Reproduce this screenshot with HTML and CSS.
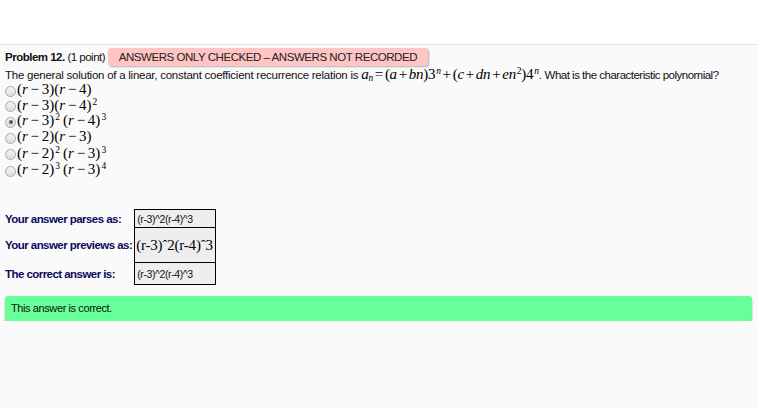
FILE: index.html
```html
<!DOCTYPE html>
<html>
<head>
<meta charset="utf-8">
<link rel="stylesheet" href="styles.css">
</head>
<body>
<div class="top"></div>
<div class="problem">
  <div class="head"><b>Problem 12.</b> (1 point) <span class="badge">ANSWERS ONLY CHECKED – ANSWERS NOT RECORDED</span></div>
  <div class="q">The general solution of a linear, constant coefficient recurrence relation is <span class="m qm"><i>a<sub>n</sub></i> = (<i>a</i> + <i>bn</i>)3<sup><i>n</i></sup> + (<i>c</i> + <i>dn</i> + <i>en</i><sup>2</sup>)4<sup><i>n</i></sup></span>. <span class="tail">What is the characteristic polynomial?</span></div>
  <div class="opts">
    <div class="opt"><span class="radio"></span><span class="m">(<i>r</i> − 3)(<i>r</i> − 4)</span></div>
    <div class="opt"><span class="radio"></span><span class="m">(<i>r</i> − 3)(<i>r</i> − 4)<sup>2</sup></span></div>
    <div class="opt"><span class="radio on"></span><span class="m">(<i>r</i> − 3)<sup>2</sup>(<i>r</i> − 4)<sup>3</sup></span></div>
    <div class="opt"><span class="radio"></span><span class="m">(<i>r</i> − 2)(<i>r</i> − 3)</span></div>
    <div class="opt"><span class="radio"></span><span class="m">(<i>r</i> − 2)<sup>2</sup>(<i>r</i> − 3)<sup>3</sup></span></div>
    <div class="opt"><span class="radio"></span><span class="m">(<i>r</i> − 2)<sup>3</sup>(<i>r</i> − 3)<sup>4</sup></span></div>
  </div>
  <table class="ans">
    <tr class="r1"><th>Your answer parses as:</th><td>(r-3)^2(r-4)^3</td></tr>
    <tr class="r2"><th>Your answer previews as:</th><td class="prev">(r-3)ˆ2(r-4)ˆ3</td></tr>
    <tr class="r3"><th>The correct answer is:</th><td>(r-3)^2(r-4)^3</td></tr>
  </table>
  <div class="correct">This answer is correct.</div>
</div>
</body>
</html>
```
FILE: styles.css
```css
html, body {
  margin: 0;
  padding: 0;
  background: #fafafa;
  font-family: "Liberation Sans", Arial, sans-serif;
  color: #111;
}
.top {
  height: 44px;
  background: #ffffff;
  border-bottom: 1px solid #e2e2e2;
}
.problem {
  padding: 3px 6px 0 5px;
  font-size: 11.5px;
  letter-spacing: -0.25px;
}
.head {
  height: 18px;
  line-height: 18px;
  display: flex;
  align-items: center;
  white-space: pre;
  letter-spacing: -0.5px;
}
.head b {
  font-weight: bold;
}
.badge {
  margin-left: 0;
  background: #ffc4c4;
  border-radius: 3px;
  box-shadow: 1px 1px 2px rgba(0,0,0,0.3);
  padding: 0 11px 0 11px;
  height: 18px;
  line-height: 18px;
  letter-spacing: -0.45px;
  font-size: 11.5px;
  color: #222;
}
.q {
  height: 16px;
  line-height: 16px;
  white-space: nowrap;
}
.tail {
  letter-spacing: -0.5px;
}
.m {
  font-family: "Liberation Serif", "Times New Roman", serif;
  font-size: 15px;
  letter-spacing: 0;
  word-spacing: -1px;
  color: #000;
}
.qm {
  letter-spacing: -0.3px;
  word-spacing: -1.5px;
}
.m i {
  font-style: italic;
}
.m sup, .m sub {
  font-size: 9.5px;
  line-height: 0;
}
.m sup {
  vertical-align: 5px;
  margin-left: 1px;
  margin-right: 3px;
}
.qm sup {
  margin-right: 0;
}
.m sub {
  vertical-align: -2px;
}
.opts {
  display: flex;
  flex-direction: column;
}
.opt {
  display: flex;
  align-items: center;
  height: 15.5px;
}
.opt:nth-child(n+4) {
  height: 16.5px;
}
.radio {
  width: 9px;
  height: 9px;
  border-radius: 50%;
  border: 1px solid #a8a8a8;
  background: linear-gradient(#f4f4f4, #dcdcdc);
  margin-right: 1px;
  margin-top: 3px;
  box-sizing: content-box;
  display: flex;
  align-items: center;
  justify-content: center;
}
.radio.on::after {
  content: "";
  width: 4px;
  height: 4px;
  border-radius: 50%;
  background: #555;
}
.ans {
  border-collapse: collapse;
  margin-top: 31px;
}
.ans th {
  text-align: left;
  font-weight: bold;
  color: #0b0b5e;
  padding: 0 2px 0 0;
  white-space: nowrap;
  letter-spacing: -0.55px;
  font-size: 11.5px;
}
.ans td {
  border: 1px solid #000;
  background: #eeeeee;
  width: 76px;
  padding: 0 2px;
  font-size: 10.5px;
  letter-spacing: -0.4px;
  color: #111;
  white-space: nowrap;
}
.ans .r1 td { height: 17px; }
.ans .r2 td { height: 34px; }
.ans .r3 td { height: 21px; }
.ans td.prev {
  font-family: "Liberation Serif", "Times New Roman", serif;
  font-size: 15px;
  letter-spacing: -0.2px;
  color: #000;
  padding: 0 1px;
}
.correct {
  margin-top: 11px;
  background: #66ff99;
  height: 25px;
  line-height: 25px;
  padding-left: 6px;
  border-radius: 3px;
  box-shadow: 0 2px 2px rgba(0,0,0,0.35);
  font-size: 11px;
  letter-spacing: -0.4px;
  color: #111;
}
```
